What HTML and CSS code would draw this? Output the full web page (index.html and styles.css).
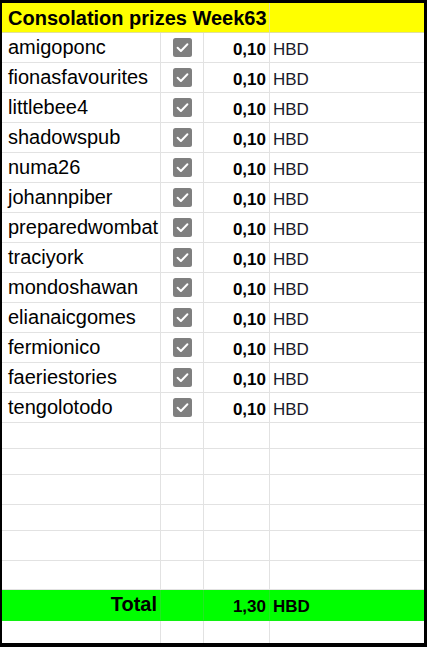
FILE: index.html
```html
<!DOCTYPE html>
<html>
<head>
<meta charset="utf-8">
<link rel="stylesheet" href="styles.css">
</head>
<body>
<div class="sheet">
  <div class="row head">
    <div class="cell title">Consolation prizes Week63</div>
    <div class="cell unit"></div>
  </div>

  <div class="row data"><div class="cell name">amigoponc</div><div class="cell chk"><svg class="box" viewBox="0 0 19 19"><rect width="19" height="19" rx="2.5"/><path d="M4.6 9.8 L7.9 13 L14.4 6.3"/></svg></div><div class="cell amt">0,10</div><div class="cell unit">HBD</div></div>
  <div class="row data"><div class="cell name">fionasfavourites</div><div class="cell chk"><svg class="box" viewBox="0 0 19 19"><rect width="19" height="19" rx="2.5"/><path d="M4.6 9.8 L7.9 13 L14.4 6.3"/></svg></div><div class="cell amt">0,10</div><div class="cell unit">HBD</div></div>
  <div class="row data"><div class="cell name">littlebee4</div><div class="cell chk"><svg class="box" viewBox="0 0 19 19"><rect width="19" height="19" rx="2.5"/><path d="M4.6 9.8 L7.9 13 L14.4 6.3"/></svg></div><div class="cell amt">0,10</div><div class="cell unit">HBD</div></div>
  <div class="row data"><div class="cell name">shadowspub</div><div class="cell chk"><svg class="box" viewBox="0 0 19 19"><rect width="19" height="19" rx="2.5"/><path d="M4.6 9.8 L7.9 13 L14.4 6.3"/></svg></div><div class="cell amt">0,10</div><div class="cell unit">HBD</div></div>
  <div class="row data"><div class="cell name">numa26</div><div class="cell chk"><svg class="box" viewBox="0 0 19 19"><rect width="19" height="19" rx="2.5"/><path d="M4.6 9.8 L7.9 13 L14.4 6.3"/></svg></div><div class="cell amt">0,10</div><div class="cell unit">HBD</div></div>
  <div class="row data"><div class="cell name">johannpiber</div><div class="cell chk"><svg class="box" viewBox="0 0 19 19"><rect width="19" height="19" rx="2.5"/><path d="M4.6 9.8 L7.9 13 L14.4 6.3"/></svg></div><div class="cell amt">0,10</div><div class="cell unit">HBD</div></div>
  <div class="row data"><div class="cell name">preparedwombat</div><div class="cell chk"><svg class="box" viewBox="0 0 19 19"><rect width="19" height="19" rx="2.5"/><path d="M4.6 9.8 L7.9 13 L14.4 6.3"/></svg></div><div class="cell amt">0,10</div><div class="cell unit">HBD</div></div>
  <div class="row data"><div class="cell name">traciyork</div><div class="cell chk"><svg class="box" viewBox="0 0 19 19"><rect width="19" height="19" rx="2.5"/><path d="M4.6 9.8 L7.9 13 L14.4 6.3"/></svg></div><div class="cell amt">0,10</div><div class="cell unit">HBD</div></div>
  <div class="row data"><div class="cell name">mondoshawan</div><div class="cell chk"><svg class="box" viewBox="0 0 19 19"><rect width="19" height="19" rx="2.5"/><path d="M4.6 9.8 L7.9 13 L14.4 6.3"/></svg></div><div class="cell amt">0,10</div><div class="cell unit">HBD</div></div>
  <div class="row data"><div class="cell name">elianaicgomes</div><div class="cell chk"><svg class="box" viewBox="0 0 19 19"><rect width="19" height="19" rx="2.5"/><path d="M4.6 9.8 L7.9 13 L14.4 6.3"/></svg></div><div class="cell amt">0,10</div><div class="cell unit">HBD</div></div>
  <div class="row data"><div class="cell name">fermionico</div><div class="cell chk"><svg class="box" viewBox="0 0 19 19"><rect width="19" height="19" rx="2.5"/><path d="M4.6 9.8 L7.9 13 L14.4 6.3"/></svg></div><div class="cell amt">0,10</div><div class="cell unit">HBD</div></div>
  <div class="row data"><div class="cell name">faeriestories</div><div class="cell chk"><svg class="box" viewBox="0 0 19 19"><rect width="19" height="19" rx="2.5"/><path d="M4.6 9.8 L7.9 13 L14.4 6.3"/></svg></div><div class="cell amt">0,10</div><div class="cell unit">HBD</div></div>
  <div class="row data"><div class="cell name">tengolotodo</div><div class="cell chk"><svg class="box" viewBox="0 0 19 19"><rect width="19" height="19" rx="2.5"/><path d="M4.6 9.8 L7.9 13 L14.4 6.3"/></svg></div><div class="cell amt">0,10</div><div class="cell unit">HBD</div></div>

  <div class="row empty h26"><div class="cell"></div><div class="cell"></div><div class="cell"></div><div class="cell"></div></div>
  <div class="row empty h26"><div class="cell"></div><div class="cell"></div><div class="cell"></div><div class="cell"></div></div>
  <div class="row empty h30"><div class="cell"></div><div class="cell"></div><div class="cell"></div><div class="cell"></div></div>
  <div class="row empty h26"><div class="cell"></div><div class="cell"></div><div class="cell"></div><div class="cell"></div></div>
  <div class="row empty h30"><div class="cell"></div><div class="cell"></div><div class="cell"></div><div class="cell"></div></div>
  <div class="row empty h29"><div class="cell"></div><div class="cell"></div><div class="cell"></div><div class="cell"></div></div>

  <div class="row total"><div class="cell label">Total</div><div class="cell"></div><div class="cell amt">1,30</div><div class="cell unit">HBD</div></div>

  <div class="row empty last"><div class="cell"></div><div class="cell"></div><div class="cell"></div><div class="cell"></div></div>
</div>
</body>
</html>
```

FILE: styles.css
```css
html, body {
  margin: 0;
  padding: 0;
  background: #000;
}

.sheet {
  box-sizing: border-box;
  width: 427px;
  height: 647px;
  border-style: solid;
  border-color: #000;
  border-width: 3px 3px 4px 2px;
  background: #fff;
  font-family: "Liberation Sans", Arial, sans-serif;
  color: #000;
  display: flex;
  flex-direction: column;
  overflow: hidden;
}

.row {
  display: grid;
  grid-template-columns: 159px 43px 66px 1fr;
  height: 30px;
  flex: none;
}

.cell {
  box-sizing: border-box;
  border-right: 1px solid #e2e2e2;
  border-bottom: 1px solid #e2e2e2;
  display: flex;
  align-items: flex-end;
  min-width: 0;
  white-space: nowrap;
  overflow: hidden;
}

.cell:last-child {
  border-right: none;
}

/* header */
.head {
  height: 30px;
  background: #ffff00;
}
.head .cell {
  border-color: #e0e0a0;
}
.head .title {
  grid-column: 1 / 4;
  font-weight: bold;
  font-size: 20px;
  line-height: 23px;
  padding: 0 0 2px 6px;
  overflow: visible;
}

/* data */
.name {
  font-size: 20px;
  line-height: 23px;
  padding: 0 0 3px 6px;
}

.chk {
  align-items: center;
  justify-content: center;
  padding-left: 1px;
}

.box {
  width: 19px;
  height: 19px;
  display: block;
}
.box rect {
  fill: #7f7f7f;
}
.box path {
  fill: none;
  stroke: #fff;
  stroke-width: 2;
  stroke-linecap: round;
  stroke-linejoin: round;
}

.amt {
  justify-content: flex-end;
  font-weight: bold;
  font-size: 17px;
  line-height: 19px;
  padding: 0 3px 3px 0;
}

.unit {
  font-size: 17px;
  line-height: 19px;
  padding: 0 0 3px 3px;
  color: #1a1a2a;
}

/* empty rows */
.h26 { height: 26px; }
.h29 { height: 29px; }
.h30 { height: 30px; }
.last {
  flex: 1 1 auto;
  height: auto;
}
.last .cell {
  border-bottom: none;
}

/* total */
.total {
  height: 31px;
  background: #00ff00;
}
.total .cell {
  border-right-color: #22e822;
  border-bottom-color: #10f010;
}
.total .label {
  justify-content: flex-end;
  font-weight: bold;
  font-size: 20px;
  line-height: 23px;
  padding: 0 3px 4px 0;
}
.total .amt {
  padding-bottom: 4px;
}
.total .unit {
  font-weight: bold;
  color: #000;
  padding-bottom: 4px;
}
```
